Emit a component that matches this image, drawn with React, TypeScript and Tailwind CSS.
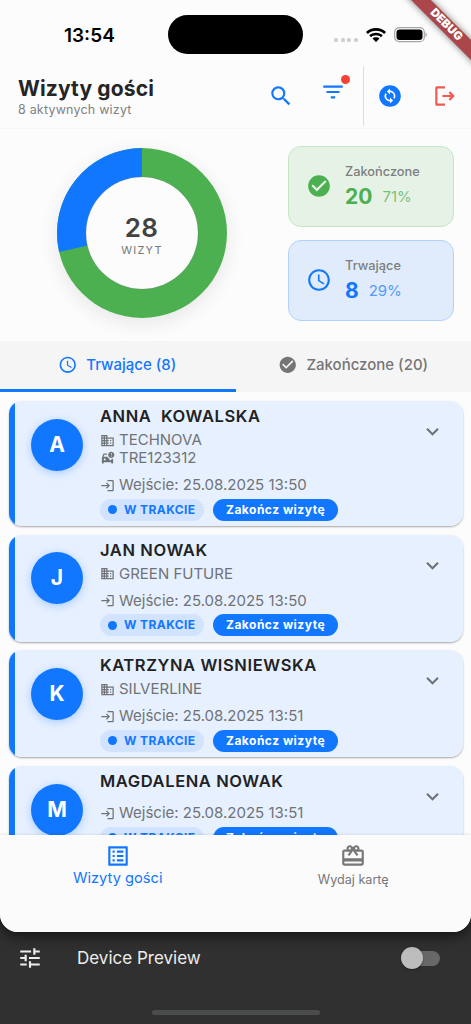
import type { ReactNode } from "react";
import clsx from "clsx";
import {
  MdSearch,
  MdFilterList,
  MdChangeCircle,
  MdLogin,
  MdCheckCircle,
  MdAccessTime,
  MdBusiness,
  MdCarCrash,
  MdExpandMore,
  MdListAlt,
  MdTune,
} from "react-icons/md";

type Visit = {
  name: string;
  company?: string;
  plate?: string;
  entry: string;
};

const VISITS: Visit[] = [
  { name: "ANNA  KOWALSKA", company: "TECHNOVA", plate: "TRE123312", entry: "25.08.2025 13:50" },
  { name: "JAN NOWAK", company: "GREEN FUTURE", entry: "25.08.2025 13:50" },
  { name: "KATRZYNA WISNIEWSKA", company: "SILVERLINE", entry: "25.08.2025 13:51" },
  { name: "MAGDALENA NOWAK", entry: "25.08.2025 13:51" },
];

function StatusBar() {
  return (
    <div className="flex h-[66px] shrink-0 items-center pt-[3px]">
      <div className="w-[168px] pt-px pl-[64px] text-[19px] leading-none font-semibold text-black">13:54</div>
      <div className="h-[39px] w-[135px] rounded-full bg-black" />
      <div className="ml-[31px] mt-[11px] flex gap-[2.6px]">
        {[0, 1, 2, 3].map((i) => (
          <span key={i} className="size-[4px] rounded-[1.5px] bg-[#cfcfcf]" />
        ))}
      </div>
      <svg className="ml-[8px]" width="20" height="14" viewBox="0 0 20 14" fill="black" aria-hidden="true">
        <path d="M10 0C6.100 0 2.600 1.500 0 4L1.900 5.900C4 3.900 6.900 2.700 10 2.700S16 3.900 18.100 5.900L20 4C17.400 1.500 13.900 0 10 0Z" />
        <path d="M10 4.700C7.300 4.700 4.900 5.700 3.200 7.300L5.100 9.200C6.400 8 8.100 7.300 10 7.300S13.600 8 14.900 9.200L16.800 7.300C15.100 5.700 12.700 4.700 10 4.700Z" />
        <path d="M10 9.300C8.600 9.300 7.300 9.800 6.500 10.600L10 14L13.500 10.600C12.700 9.800 11.400 9.300 10 9.300Z" />
      </svg>
      <svg className="ml-[8px]" width="34" height="16" viewBox="0 0 34 16" aria-hidden="true">
        <rect x="0.700" y="0.700" width="29.600" height="14" rx="4.500" fill="none" stroke="#a5a5a5" strokeWidth="1.200" />
        <rect x="2.500" y="2.500" width="26" height="10.400" rx="3" fill="black" />
        <path d="M31.500 5.500C33.300 6 33.300 9.500 31.500 10Z" fill="#a5a5a5" />
      </svg>
    </div>
  );
}

function DebugBanner() {
  return (
    <div className="absolute top-0 right-0 size-[70px] overflow-hidden">
      <div className="absolute top-[18px] left-[-15px] flex h-[14px] w-[120px] rotate-45 items-center justify-center bg-[#ab474b] text-[11.500px] leading-none font-black text-white shadow-[0_0_7px_rgba(0,0,0,0.5)]">
        DEBUG
      </div>
    </div>
  );
}

function Header() {
  return (
    <header className="flex h-[63px] shrink-0 border-b border-[#f6f6f6]">
      <div className="w-[268px] pt-[9px] pl-[18px]">
        <h1 className="text-[21px] leading-[28px] font-bold tracking-[0.15px] text-[#252525]">Wizyty gości</h1>
        <p className="text-[12.500px] leading-[13px] tracking-[0.2px] text-[#828282]">8 aktywnych wizyt</p>
      </div>
      <div className="flex h-[60px] items-center text-[#1277ff]">
        <MdSearch className="size-[26px]" />
        <div className="relative ml-[26px] -mt-[9px]">
          <MdFilterList className="size-[26px]" />
          <span className="absolute -top-[4px] left-[21px] size-[9px] rounded-full bg-[#f44336]" />
        </div>
      </div>
      <div className="ml-[17px] flex h-[60px] items-center border-l border-[#dedede]">
        <MdChangeCircle className="ml-[13px] size-[26px] text-[#1277ff]" />
        <svg className="ml-[29px] size-[26px]" viewBox="0 0 24 24" fill="#f25a52" aria-hidden="true">
          <path d="M12 3v2H5v14h7v2H4.500C3.700 21 3 20.300 3 19.500v-15C3 3.700 3.700 3 4.500 3z" />
          <path d="M9.500 11h7.700l-1.900-1.900 1.400-1.400L21 12l-4.300 4.300-1.400-1.400 1.900-1.900H9.500z" />
        </svg>
      </div>
    </header>
  );
}

function Donut() {
  return (
    <div className="relative size-[170px] rounded-full shadow-[0_5px_20px_rgba(0,0,0,0.09)]">
      <svg width="170" height="170" viewBox="0 0 170 170" aria-hidden="true">
        <circle cx="85" cy="85" r="85" fill="#4caf50" />
        <path d="M85 85V0A85 85 0 0 0 2.130 103.910Z" fill="#1277ff" />
        <circle cx="85" cy="85" r="56" fill="#fcfcfc" />
        <circle cx="85" cy="85" r="56.300" fill="none" stroke="#777" strokeOpacity="0.25" />
      </svg>
      <div className="absolute inset-0 flex flex-col items-center justify-center pt-[5px]">
        <span className="text-[26px] leading-[28px] font-semibold tracking-[0.3px] text-[#424242]">28</span>
        <span className="mt-px pl-px text-[11px] leading-[14px] tracking-[1.2px] text-[#777]">WIZYT</span>
      </div>
    </div>
  );
}

function StatCard({
  icon,
  label,
  value,
  percent,
  className,
}: {
  icon: ReactNode;
  label: string;
  value: number;
  percent: string;
  className: string;
}) {
  return (
    <div className={clsx("flex h-[81.500px] w-[166px] items-center rounded-[13px] border pl-[17px]", className)}>
      {icon}
      <div className="ml-[13px]">
        <p className="text-[12.800px] leading-[18px] font-medium text-[#7b7f80]">{label}</p>
        <p className="mt-[3px] flex items-center gap-[10px] leading-[26px]">
          <span className="text-[21px] font-bold">{value}</span>
          <span className="text-[15px] opacity-70">{percent}</span>
        </p>
      </div>
    </div>
  );
}

function Summary() {
  return (
    <section className="flex h-[212px] shrink-0 items-start">
      <div className="w-[288px] pt-[19px] pl-[56.500px]">
        <Donut />
      </div>
      <div className="flex flex-col gap-[12.500px] pt-[16.500px]">
        <StatCard
          icon={<MdCheckCircle className="size-[26px]" />}
          label="Zakończone"
          value={20}
          percent="71%"
          className="border-[#c5e5c7] bg-[#e7f2e7] text-[#4caf50]"
        />
        <StatCard
          icon={<MdAccessTime className="size-[26px]" />}
          label="Trwające"
          value={8}
          percent="29%"
          className="border-[#b2d1ff] bg-[#e0ecfb] text-[#1277ff]"
        />
      </div>
    </section>
  );
}

function Tabs() {
  return (
    <div className="flex h-[51px] shrink-0 bg-[#f5f5f5] text-[15px] font-medium">
      <div className="flex w-[236px] items-center justify-center gap-[9px] border-b-[3px] border-[#1277ff] pr-[2px] text-[#1277ff]">
        <MdAccessTime className="size-[19.500px]" />
        Trwające (8)
      </div>
      <div className="flex flex-1 items-center justify-center gap-[9px] pr-[1px] pb-[3px] text-[#757575]">
        <MdCheckCircle className="size-[19.500px]" />
        Zakończone (20)
      </div>
    </div>
  );
}

function InfoRow({ icon, children }: { icon: ReactNode; children: ReactNode }) {
  return (
    <div className="flex h-[18px] items-center gap-[4px] text-[15px] leading-[18px] text-[#707375]">
      {icon}
      <span>{children}</span>
    </div>
  );
}

function VisitCard({ visit }: { visit: Visit }) {
  return (
    <article className="flex shrink-0 overflow-hidden rounded-[13px] bg-[linear-gradient(to_right,#1277ff_5.500px,#e7f0ff_5.500px)] pb-[5.500px] shadow-[0_1px_2px_rgba(0,0,0,0.35)]">
      <div className="mt-[17.500px] ml-[22.500px] flex size-[52px] shrink-0 items-center justify-center rounded-full bg-[#1277ff] text-[21px] font-bold text-white shadow-[0_2px_9px_rgba(18,119,255,0.3)]">
        {visit.name[0]}
      </div>
      <div className="ml-[17px] flex-1 pt-[4px]">
        <h2 className="mb-[4px] text-[16.500px] leading-[22px] font-semibold tracking-[0.6px] whitespace-pre text-[#202224]">
          {visit.name}
        </h2>
        {visit.company && <InfoRow icon={<MdBusiness className="size-[15px]" />}>{visit.company}</InfoRow>}
        {visit.plate && <InfoRow icon={<MdCarCrash className="size-[15px]" />}>{visit.plate}</InfoRow>}
        <div className={visit.company ? "mt-[9px]" : "mt-[12px]"}>
          <InfoRow icon={<MdLogin className="size-[15px]" />}>Wejście: {visit.entry}</InfoRow>
        </div>
        <div className="mt-[4.500px] flex gap-[9px]">
          <span className="flex h-[22px] w-[104px] items-center gap-[7px] rounded-full bg-[#d1e3ff] pl-[8px] text-[12px] font-bold tracking-[0.4px] whitespace-nowrap text-[#1277ff]">
            <i className="size-[9px] shrink-0 rounded-full bg-[#1277ff]" />W TRAKCIE
          </span>
          <button className="h-[22px] w-[125px] rounded-full bg-[#1277ff] text-[12px] leading-[22px] font-bold tracking-[0.5px] whitespace-nowrap text-white">
            Zakończ wizytę
          </button>
        </div>
      </div>
      <MdExpandMore className="mt-[18px] mr-[18px] size-[25px] shrink-0 text-[#707375]" />
    </article>
  );
}

function BottomNav() {
  return (
    <nav className="relative grid h-[97px] shrink-0 grid-cols-2 bg-[#fbfbfb] shadow-[0_-1px_2px_rgba(0,0,0,0.08)]">
      <div className="flex flex-col items-center pt-[8px] text-[#1277ff]">
        <MdListAlt className="size-[26px]" />
        <span className="text-[14.700px] leading-[19px]">Wizyty gości</span>
      </div>
      <div className="flex flex-col items-center pt-[8px] text-[#777]">
        {/* gift card with a bow on top */}
        <svg width="26" height="26" viewBox="0 0 24 24" fill="currentColor" aria-hidden="true">
          <path d="M20 6h-2.180c.11-.31.18-.65.18-1 0-1.660-1.340-3-3-3-1.050 0-1.960.54-2.500 1.350l-.5.67-.5-.68C10.960 2.540 10.050 2 9 2 7.340 2 6 3.340 6 5c0 .35.070.69.180 1H4c-1.110 0-1.990.89-1.990 2L2 19c0 1.110.89 2 2 2h16c1.110 0 2-.89 2-2V8c0-1.110-.89-2-2-2zm-5-2c.55 0 1 .45 1 1s-.45 1-1 1-1-.45-1-1 .45-1 1-1zM9 4c.55 0 1 .45 1 1s-.45 1-1 1-1-.45-1-1 .45-1 1-1zm11 15H4v-2h16v2zm0-5H4V8h5.080L7 10.830 8.620 12 12 7.400l3.380 4.600L17 10.830 14.920 8H20v6z" />
        </svg>
        <span className="mt-[2px] text-[12.600px] leading-[18px]">Wydaj kartę</span>
      </div>
    </nav>
  );
}

function DevicePreviewBar() {
  return (
    <footer className="flex h-[92px] flex-col items-center bg-[#303030]">
      <div className="flex h-[52px] w-full items-center pr-[31px] pl-[17px] text-[#ededed]">
        <MdTune className="size-[26px]" />
        <span className="mt-px ml-[34px] flex-1 text-[17px]">Device Preview</span>
        <div className="flex h-[15px] w-[38px] items-center rounded-full bg-[#686868]">
          <span className="-ml-px size-[22px] rounded-full bg-[#bdbdbd] shadow-[0_1px_2px_rgba(0,0,0,0.4)]" />
        </div>
      </div>
      <div className="mt-[26px] h-[5px] w-[168px] rounded-full bg-[#4b4d4c]" />
    </footer>
  );
}

export default function App() {
  return (
    <div className="h-[1024px] w-[471px] overflow-hidden bg-[#303030] font-['Inter',sans-serif]">
      <div className="relative z-10 flex h-[932px] flex-col overflow-hidden rounded-b-[18px] bg-[#fcfcfc] shadow-[0_4px_14px_rgba(0,0,0,0.6)]">
        <StatusBar />
        <Header />
        <Summary />
        <Tabs />
        <main className="flex min-h-0 flex-1 flex-col gap-[8.700px] overflow-hidden pt-[9px] pr-[8px] pl-[8.500px]">
          {VISITS.map((visit) => (
            <VisitCard key={visit.name} visit={visit} />
          ))}
        </main>
        <BottomNav />
        <DebugBanner />
      </div>
      <DevicePreviewBar />
    </div>
  );
}
